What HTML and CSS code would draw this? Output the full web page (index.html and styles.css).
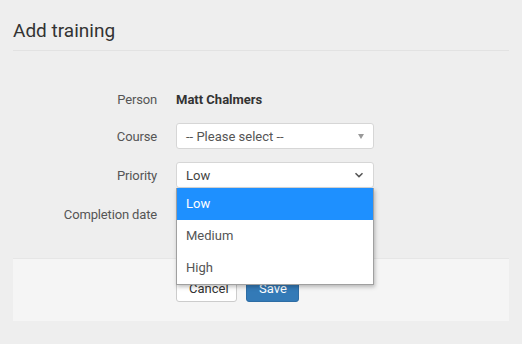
FILE: index.html
```html
<!DOCTYPE html>
<html>
<head>
<meta charset="utf-8">
<link rel="stylesheet" href="styles.css">
</head>
<body>
<div class="page">
  <h1 class="title">Add training</h1>
  <form class="form">
    <div class="row row-static">
      <div class="label">Person</div>
      <div class="static">Matt Chalmers</div>
    </div>
    <div class="row">
      <div class="label">Course</div>
      <div class="select">
        <span class="select-text">-- Please select --</span>
        <span class="caret"></span>
      </div>
    </div>
    <div class="row">
      <div class="label">Priority</div>
      <div class="select-wrap">
        <div class="select native">
          <span class="select-text dark">Low</span>
          <svg class="chev" width="10" height="6" viewBox="0 0 10 6"><path d="M1.5 1.3 L5 4.6 L8.5 1.3" fill="none" stroke="#555" stroke-width="1.5"/></svg>
        </div>
        <ul class="menu">
          <li class="opt active">Low</li>
          <li class="opt">Medium</li>
          <li class="opt">High</li>
        </ul>
      </div>
    </div>
    <div class="row">
      <div class="label">Completion date</div>
      <div class="select"></div>
    </div>
  </form>
  <div class="footer">
    <div class="actions">
      <button type="button" class="btn btn-default">Cancel</button>
      <button type="button" class="btn btn-primary">Save</button>
    </div>
  </div>
</div>
</body>
</html>
```

FILE: styles.css
```css
html, body {
  margin: 0;
  padding: 0;
  background: #eeeeee;
  font-family: Roboto, "Liberation Sans", Arial, sans-serif;
  color: #555;
}
.page {
  padding: 0 13px;
}
.title {
  margin: 0;
  padding: 20px 0 9px 0;
  font-size: 19px;
  font-weight: 400;
  color: #333;
  line-height: 21px;
  border-bottom: 1px solid #e2e2e2;
}
.form {
  display: flex;
  flex-direction: column;
  gap: 13px;
  padding: 35px 0 31px 0;
}
.row {
  display: grid;
  grid-template-columns: 144px 198px;
  column-gap: 19px;
  align-items: center;
  height: 26px;
}
.row-static {
  box-sizing: border-box;
  height: 24px;
  padding-top: 2px;
}
.label {
  text-align: right;
  font-size: 13px;
  letter-spacing: -0.15px;
  color: #555;
}
.static {
  font-size: 13px;
  font-weight: 700;
  color: #333;
}
.select {
  box-sizing: border-box;
  height: 26px;
  background: #fff;
  border: 1px solid #d6d6d6;
  border-radius: 3px;
  display: flex;
  align-items: center;
  justify-content: space-between;
  padding: 0 8px 0 9px;
}
.select-text {
  font-size: 13px;
  color: #555;
}
.select-text.dark {
  color: #444;
}
.caret {
  width: 0;
  height: 0;
  border-left: 3.5px solid transparent;
  border-right: 3.5px solid transparent;
  border-top: 5px solid #999;
  margin-right: 1px;
}
.chev {
  margin-right: 1px;
}
.select-wrap {
  position: relative;
}
.menu {
  position: absolute;
  left: 0;
  top: 26px;
  width: 198px;
  box-sizing: border-box;
  margin: 0;
  padding: 0;
  list-style: none;
  background: #fff;
  border: 1px solid #a0a0a0;
  border-top: none;
  box-shadow: 1px 2px 4px rgba(0,0,0,0.25);
  z-index: 10;
}
.opt {
  height: 32px;
  line-height: 32px;
  padding-left: 9px;
  font-size: 13px;
  color: #555;
}
.opt.active {
  background: #1e90ff;
  color: #fff;
}
.footer {
  background: #f5f5f5;
  border-top: 1px solid #e6e6e6;
  padding: 15px 0 19px 0;
}
.actions {
  display: flex;
  gap: 9px;
  padding-left: 163px;
}
.btn {
  height: 28px;
  font-family: Roboto, "Liberation Sans", Arial, sans-serif;
  font-size: 13px;
  border-radius: 3px;
  padding: 0 12px;
  cursor: pointer;
}
.btn-default {
  background: #fff;
  border: 1px solid #ccc;
  color: #333;
  width: 61px;
}
.btn-primary {
  background: #337ab7;
  border: 1px solid #2e6da4;
  color: #fff;
  width: 53px;
}
```
